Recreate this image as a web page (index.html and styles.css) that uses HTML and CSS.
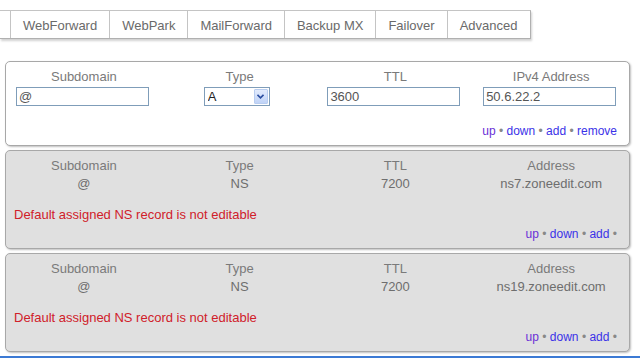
FILE: index.html
```html
<!DOCTYPE html>
<html lang="en">
<head>
    <meta charset="UTF-8">
    <title>Zone Records</title>
    <link rel="stylesheet" href="styles.css">
</head>
<body>
    <!-- Record type tabs -->
    <nav class="tabs">
        <span class="tab tab-cut"></span>
        <a class="tab" href="#">WebForward</a>
        <a class="tab" href="#">WebPark</a>
        <a class="tab" href="#">MailForward</a>
        <a class="tab" href="#">Backup MX</a>
        <a class="tab" href="#">Failover</a>
        <a class="tab" href="#">Advanced</a>
    </nav>

    <!-- Editable A record -->
    <div class="record editable">
        <div class="cols">
            <div>Subdomain</div>
            <div>Type</div>
            <div>TTL</div>
            <div>IPv4 Address</div>
        </div>
        <div class="cols fields">
            <div><input type="text" value="@"></div>
            <div>
                <span class="select-wrap">
                    <select><option>A</option></select>
                    <span class="select-btn">
                        <svg width="7" height="5" viewBox="0 0 7 5"><path d="M0.5 0.8 L3.5 3.8 L6.5 0.8" fill="none" stroke="#2a4da0" stroke-width="1.6"/></svg>
                    </span>
                </span>
            </div>
            <div><input type="text" value="3600"></div>
            <div><input type="text" value="50.6.22.2"></div>
        </div>
        <div class="actions">
            <a href="#" class="visited">up</a> <span class="dot">•</span> <a href="#">down</a> <span class="dot">•</span> <a href="#">add</a> <span class="dot">•</span> <a href="#">remove</a>
        </div>
    </div>

    <!-- Locked NS records -->
    <div class="record locked">
        <div class="cols">
            <div>Subdomain</div>
            <div>Type</div>
            <div>TTL</div>
            <div>Address</div>
        </div>
        <div class="cols values">
            <div>@</div>
            <div>NS</div>
            <div>7200</div>
            <div>ns7.zoneedit.com</div>
        </div>
        <div class="note">Default assigned NS record is not editable</div>
        <div class="actions">
            <a href="#" class="visited">up</a> <span class="dot">•</span> <a href="#">down</a> <span class="dot">•</span> <a href="#">add</a> <span class="dot">•</span>
        </div>
    </div>

    <div class="record locked">
        <div class="cols">
            <div>Subdomain</div>
            <div>Type</div>
            <div>TTL</div>
            <div>Address</div>
        </div>
        <div class="cols values">
            <div>@</div>
            <div>NS</div>
            <div>7200</div>
            <div>ns19.zoneedit.com</div>
        </div>
        <div class="note">Default assigned NS record is not editable</div>
        <div class="actions">
            <a href="#" class="visited">up</a> <span class="dot">•</span> <a href="#">down</a> <span class="dot">•</span> <a href="#">add</a> <span class="dot">•</span>
        </div>
    </div>

    <div class="taskbar"></div>
</body>
</html>
```

FILE: styles.css
```css
body {
    margin: 0;
    font-family: "Liberation Sans", Arial, sans-serif;
    font-size: 13px;
    color: #7a7a7a;
    background: #fff;
    overflow: hidden;
}

/* Tabs */
.tabs {
    display: flex;
    width: fit-content;
    height: 27px;
    margin-top: 10px;
    border-top: 1px solid #c4c4c4;
    border-bottom: 1px solid #b0b0b0;
    border-right: 1px solid #b0b0b0;
    box-shadow: 1px 2px 2px rgba(0, 0, 0, 0.18);
}

.tab {
    display: flex;
    flex: none;
    align-items: center;
    justify-content: center;
    padding: 1px 12px 0;
    border-left: 1px solid #c4c4c4;
    color: #6a6a6a;
    text-decoration: none;
    font-size: 13px;
    white-space: nowrap;
}

.tab-cut {
    width: 10px;
    padding: 0;
    border-left: none;
}

/* Record panels */
.record {
    width: 623px;
    margin: 0 0 4px 5px;
    border: 1px solid #a8a8a8;
    border-radius: 5px;
    box-shadow: 1px 1px 2px rgba(0, 0, 0, 0.25);
    padding: 6px 0 5px;
}

.editable {
    margin-top: 22px;
    background: #fff;
}

.locked {
    background: #e0e0e0;
}

.cols {
    display: grid;
    grid-template-columns: repeat(4, 1fr);
    text-align: center;
    line-height: 18px;
}

.values {
    color: #6e6e6e;
}

.fields {
    margin-top: 1px;
    line-height: normal;
}

.fields input {
    width: 133px;
    height: 19px;
    box-sizing: border-box;
    border: 1px solid #7f9db9;
    padding: 0 2px;
    font-family: "Liberation Sans", Arial, sans-serif;
    font-size: 13px;
    color: #555;
    margin-left: -3px;
}

.select-wrap {
    position: relative;
    display: inline-block;
    width: 66px;
    height: 19px;
    margin-left: -6px;
}

.select-wrap select {
    appearance: none;
    width: 66px;
    height: 19px;
    border: 1px solid #7f9db9;
    background: #fff;
    padding: 0 3px;
    font-family: "Liberation Sans", Arial, sans-serif;
    font-size: 13px;
    color: #222;
}

.select-btn {
    position: absolute;
    top: 2px;
    right: 2px;
    width: 14px;
    height: 15px;
    box-sizing: border-box;
    border: 1px solid #b8cdf0;
    border-radius: 1px;
    background: linear-gradient(#e2ebfd, #c0d3f7);
    display: flex;
    align-items: center;
    justify-content: center;
}

.actions {
    text-align: right;
    padding-right: 12px;
    font-size: 12px;
    line-height: 18px;
    margin-top: 16px;
}

.locked .actions {
    margin-top: 1px;
}

.actions a {
    color: #3b32e8;
    text-decoration: none;
}

.actions a.visited {
    color: #6a2fd6;
}

.dot {
    color: #888;
}

.note {
    color: #d0202a;
    padding-left: 8px;
    line-height: 18px;
    margin-top: 13px;
}

.taskbar {
    height: 4px;
    margin-top: 0;
    background: #3c7ad4;
}
```
